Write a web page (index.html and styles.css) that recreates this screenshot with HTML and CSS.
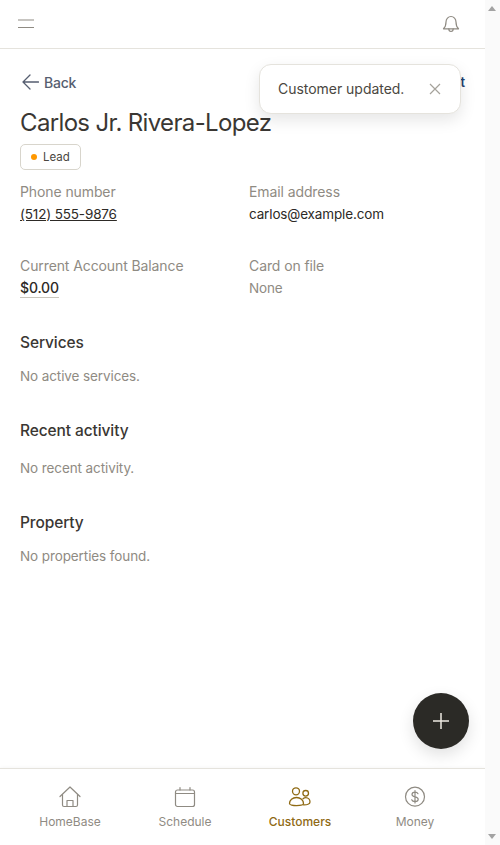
FILE: index.html
```html
<!DOCTYPE html>
<html lang="en">
<head>
    <meta charset="UTF-8">
    <meta name="viewport" content="width=device-width, initial-scale=1.0">
    <title>Customer</title>
    <link rel="stylesheet" href="styles.css">
</head>
<body>
    <div class="app">
        <header class="topbar">
            <svg class="menu-icon" width="16" height="10" viewBox="0 0 16 10" fill="none" stroke="#8f8b83" stroke-width="1.2">
                <path d="M0 1h16M0 8.500h16"/>
            </svg>
            <svg class="bell-icon" width="18" height="18" viewBox="0 0 18 18" fill="none" stroke="#8f8b83" stroke-width="1.2" stroke-linecap="round" stroke-linejoin="round">
                <path d="M4 7a5 5.500 0 0 1 10 0c0 3.200.8 5.200 2.500 6.800h-15C3.200 12.200 4 10.200 4 7z"/>
                <path d="M6.800 13.800c0 3.600 4.400 3.600 4.400 0"/>
            </svg>
        </header>

        <main class="content">
            <div class="nav-row">
                <a class="back-link">
                    <svg width="17" height="16" viewBox="0 0 17 16" fill="none" stroke="#565e70" stroke-width="1.3" stroke-linecap="round" stroke-linejoin="round">
                        <path d="M16.500 8H1M8 1L1 8l7 7"/>
                    </svg>
                    Back
                </a>
                <a class="edit-link">Edit</a>
            </div>
            <h1 class="customer-name">Carlos Jr. Rivera-Lopez</h1>
            <span class="status-tag"><i class="status-dot"></i>Lead</span>

            <div class="info-grid">
                <div class="info-item">
                    <div class="info-label">Phone number</div>
                    <a class="info-value phone-link">(512) 555-9876</a>
                </div>
                <div class="info-item">
                    <div class="info-label">Email address</div>
                    <div class="info-value">carlos@example.com</div>
                </div>
                <div class="info-item">
                    <div class="info-label">Current Account Balance</div>
                    <span class="info-value balance">$0.00</span>
                </div>
                <div class="info-item">
                    <div class="info-label">Card on file</div>
                    <div class="info-value muted">None</div>
                </div>
            </div>

            <section class="block block-services">
                <h2>Services</h2>
                <p>No active services.</p>
            </section>
            <section class="block block-activity">
                <h2>Recent activity</h2>
                <p>No recent activity.</p>
            </section>
            <section class="block block-property">
                <h2>Property</h2>
                <p>No properties found.</p>
            </section>
        </main>

        <nav class="tabbar">
            <a class="tab">
                <svg width="24" height="24" viewBox="0 0 24 24" fill="none" stroke="#8f8b83" stroke-width="1.2" stroke-linecap="round" stroke-linejoin="round">
                    <path d="M2 11.500L12 2l10 9.500"/>
                    <path d="M4.500 9.500V20a1.500 1.500 0 0 0 1.500 1.500h12a1.500 1.500 0 0 0 1.500-1.500V9.500"/>
                    <path d="M9 21.500V15.500h6v6"/>
                </svg>
                HomeBase
            </a>
            <a class="tab">
                <svg width="24" height="24" viewBox="0 0 24 24" fill="none" stroke="#8f8b83" stroke-width="1.2" stroke-linecap="round" stroke-linejoin="round">
                    <rect x="2.500" y="5" width="19" height="16.500" rx="2"/>
                    <path d="M2.500 8.500h19M7 2.500V5M17 2.500V5"/>
                </svg>
                Schedule
            </a>
            <a class="tab active">
                <svg width="24" height="24" viewBox="0 0 24 24" fill="none" stroke="#8f6a14" stroke-width="1.3" stroke-linecap="round" stroke-linejoin="round">
                    <circle cx="8" cy="6.300" r="3.500"/>
                    <circle cx="17.700" cy="8.300" r="2.800"/>
                    <path d="M1.500 18.500c0-3.500 3-6 7-6s7 2.500 7 6c0 2.800-14 2.800-14 0z"/>
                    <path d="M15 13.700c.8-.7 1.800-1.100 2.800-1.100 2.500 0 4.200 2 4.200 4.400 0 2.200-3 2.900-6.500 2.800"/>
                </svg>
                Customers
            </a>
            <a class="tab">
                <svg width="24" height="24" viewBox="0 0 24 24" fill="none" stroke="#8f8b83" stroke-width="1.2" stroke-linecap="round" stroke-linejoin="round">
                    <circle cx="12" cy="11.700" r="9.500"/>
                    <path d="M15 8.700c-.5-1-1.600-1.500-3-1.500-1.700 0-3 .8-3 2.300 0 3.200 6.200 1.600 6.200 4.800 0 1.500-1.400 2.300-3.200 2.300-1.600 0-2.800-.6-3.300-1.800M12 5.500v12.500"/>
                </svg>
                Money
            </a>
        </nav>

        <button class="fab">
            <svg width="18" height="18" viewBox="0 0 18 18" fill="none" stroke="#eeeae2" stroke-width="1.5">
                <path d="M9 1v16M1 9h16"/>
            </svg>
        </button>

        <div class="toast">
            <span>Customer updated.</span>
            <svg width="12" height="12" viewBox="0 0 12 12" fill="none" stroke="#a5a29b" stroke-width="1.2">
                <path d="M1 1l10 10M11 1L1 11"/>
            </svg>
        </div>
    </div>

    <div class="scrollbar">
        <i class="arrow-up"></i>
        <i class="arrow-down"></i>
    </div>
</body>
</html>
```

FILE: styles.css
```css
* {
    box-sizing: border-box;
}
body {
    margin: 0;
    height: 845px;
    overflow: hidden;
    display: flex;
    background: white;
    color: #3a3733;
    font-family: 'Inter', 'Liberation Sans', sans-serif;
}
.app {
    position: relative;
    width: 485px;
    height: 845px;
    display: flex;
    flex-direction: column;
}
.topbar {
    height: 49px;
    flex-shrink: 0;
    padding: 0 25px 0 18px;
    display: flex;
    justify-content: space-between;
    align-items: center;
    border-bottom: 1px solid #e5e3dd;
}
.content {
    flex: 1;
    padding: 0 20px;
}
.nav-row {
    display: flex;
    justify-content: space-between;
    align-items: center;
    margin-top: 24px;
    height: 18px;
}
.back-link {
    display: flex;
    align-items: center;
    gap: 5px;
    margin-left: 2px;
    font-size: 14px;
    font-weight: 500;
    color: #565e70;
    letter-spacing: -0.2px;
}
.edit-link {
    font-size: 13px;
    font-weight: 600;
    color: #24406e;
}
.customer-name {
    margin: 17px 0 0;
    font-size: 24px;
    line-height: 30px;
    font-weight: 400;
    letter-spacing: -0.65px;
}
.status-tag {
    display: inline-flex;
    align-items: center;
    gap: 6px;
    height: 26px;
    margin-top: 6px;
    padding: 0 10px;
    font-size: 11.5px;
    color: #4a4741;
    border: 1px solid #d8d5cc;
    border-radius: 5px;
}
.status-dot {
    width: 6px;
    height: 6px;
    border-radius: 50%;
    background: #ff9800;
}
.info-grid {
    display: grid;
    grid-template-columns: 229px 1fr;
    row-gap: 32px;
    margin-top: 12px;
}
.info-label {
    font-size: 14px;
    line-height: 20px;
    color: #8f8b83;
    letter-spacing: -0.1px;
}
.info-value {
    display: block;
    margin-top: 2px;
    font-size: 13.5px;
    line-height: 20px;
    color: #2d2a26;
    letter-spacing: -0.15px;
}
.phone-link {
    width: fit-content;
    text-decoration: underline;
}
.balance {
    width: fit-content;
    font-size: 14px;
    line-height: 19px;
    font-weight: 500;
    border-bottom: 1px solid #c9c6bd;
}
.muted {
    color: #8f8b83;
}
.block h2 {
    margin: 0;
    font-size: 15.5px;
    line-height: 20px;
    font-weight: 500;
    letter-spacing: -0.1px;
}
.block p {
    margin: 13px 0 0;
    font-size: 13.5px;
    line-height: 20px;
    color: #8f8b83;
    letter-spacing: -0.1px;
}
.block-services {
    margin-top: 35px;
}
.block-activity {
    margin-top: 35px;
}
.block-activity p {
    margin-top: 17px;
}
.block-property {
    margin-top: 35px;
}
.tabbar {
    height: 77px;
    flex-shrink: 0;
    display: grid;
    grid-template-columns: repeat(4, 115px);
    padding: 0 12.5px;
    border-top: 1px solid #e5e3dd;
    box-shadow: 0 -1px 3px rgba(0, 0, 0, 0.03);
}
.tab {
    display: flex;
    flex-direction: column;
    align-items: center;
    padding-top: 16px;
    gap: 5px;
    font-size: 12px;
    color: #8f8b83;
}
.tab.active {
    color: #8f6a14;
    font-weight: 500;
}
.fab {
    position: absolute;
    left: 413px;
    top: 693px;
    width: 56px;
    height: 56px;
    display: flex;
    align-items: center;
    justify-content: center;
    padding: 0;
    border: none;
    border-radius: 50%;
    background: #2b2a26;
    box-shadow: 0 6px 16px rgba(0, 0, 0, 0.12);
}
.toast {
    position: absolute;
    left: 259px;
    top: 64px;
    width: 202px;
    height: 50px;
    display: flex;
    align-items: center;
    justify-content: space-between;
    padding: 0 19px 1px 18px;
    background: white;
    border: 1px solid #e5e3dd;
    border-radius: 12px;
    box-shadow: 0 6px 16px rgba(0, 0, 0, 0.1);
    font-size: 14px;
    letter-spacing: -0.03px;
    color: #4a4741;
}
.scrollbar {
    position: relative;
    width: 15px;
    height: 845px;
    background: #fafafa;
}
.arrow-up, .arrow-down {
    position: absolute;
    left: 3px;
    width: 0;
    height: 0;
    border-left: 4.5px solid transparent;
    border-right: 4.5px solid transparent;
}
.arrow-up {
    top: 6px;
    border-bottom: 5px solid #a3a3a3;
}
.arrow-down {
    bottom: 6px;
    border-top: 5px solid #a3a3a3;
}
```
